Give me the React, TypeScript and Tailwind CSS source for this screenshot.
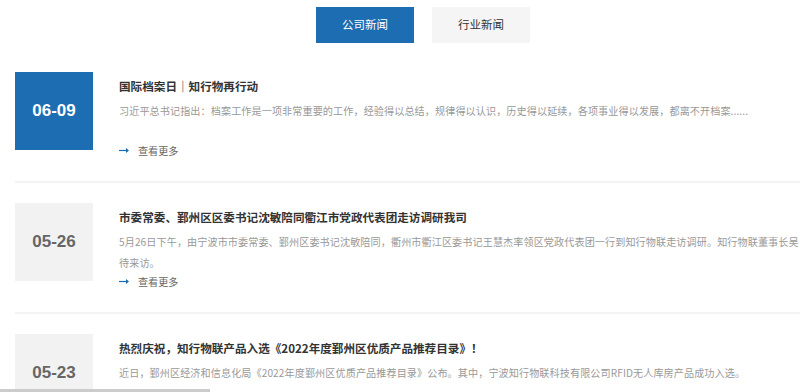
import React from "react";

const cjk = { fontFamily: '"Noto Sans CJK SC", "Noto Sans", sans-serif' };
const arial = { fontFamily: '"Liberation Sans", Arial, sans-serif' };

type Item = {
  date: string;
  active?: boolean;
  title: string;
  lines: string[];
};

const items: Item[] = [
  {
    date: "06-09",
    active: true,
    title: "国际档案日｜知行物再行动",
    lines: [
      "习近平总书记指出：档案工作是一项非常重要的工作，经验得以总结，规律得以认识，历史得以延续，各项事业得以发展，都离不开档案......",
    ],
  },
  {
    date: "05-26",
    title: "市委常委、鄞州区区委书记沈敏陪同衢江市党政代表团走访调研我司",
    lines: [
      "5月26日下午，由宁波市市委常委、鄞州区委书记沈敏陪同，衢州市衢江区委书记王慧杰率领区党政代表团一行到知行物联走访调研。知行物联董事长吴",
      "待来访。",
    ],
  },
  {
    date: "05-23",
    title: "热烈庆祝，知行物联产品入选《2022年度鄞州区优质产品推荐目录》！",
    lines: [
      "近日，鄞州区经济和信息化局《2022年度鄞州区优质产品推荐目录》公布。其中，宁波知行物联科技有限公司RFID无人库房产品成功入选。",
    ],
  },
];

function Arrow() {
  return (
    <svg width="11" height="7" viewBox="0 0 11 7" className="shrink-0">
      <path d="M0 3.5H9" stroke="#1c6db2" strokeWidth="1.2" />
      <path d="M7 1L10 3.5L7 6Z" fill="#1c6db2" />
    </svg>
  );
}

function NewsItem({ item }: { item: Item }) {
  return (
    <div className="pt-[20px] pb-[31px] border-b-2 border-[#f3f3f3]">
      <div className="flex items-start h-[78px]">
        <div
          className={
            "w-[78px] h-[78px] shrink-0 flex items-center justify-center text-[17px] font-bold " +
            (item.active ? "bg-[#1c6db2] text-white" : "bg-[#f2f2f2] text-[#666666]")
          }
          style={arial}
        >
          {item.date}
        </div>
        <div className="ml-[26px] flex flex-col min-w-0" style={cjk}>
          <div className="mt-[4px] h-[20px] leading-[20px] text-[11.6px] font-bold text-[#333333] whitespace-nowrap">
            {item.title}
          </div>
          <div className="mt-[4px] min-h-[42px] text-[10.1px] leading-[21px] text-[#999999]">
            {item.lines.map((l, i) => (
              <div key={i} className="whitespace-nowrap tracking-[0.1px]">
                {l}
              </div>
            ))}
          </div>
          <div className="flex items-center h-[17px] text-[10.1px] text-[#666666]">
            <Arrow />
            <span className="ml-[8px]">查看更多</span>
          </div>
        </div>
      </div>
    </div>
  );
}

export default function App() {
  return (
    <div className="relative w-[800px] h-[392px] overflow-hidden bg-white">
      <div className="w-[846px] px-[15px] pt-[7px]">
        <div className="flex justify-center gap-[18px] mb-[9px]" style={cjk}>
          <div className="w-[98px] h-[36px] flex items-center justify-center bg-[#1c6db2] text-white text-[11.5px]">
            公司新闻
          </div>
          <div className="w-[98px] h-[36px] flex items-center justify-center bg-[#f5f5f5] text-[#333333] text-[11.5px]">
            行业新闻
          </div>
        </div>
        {items.map((it) => (
          <NewsItem key={it.date} item={it} />
        ))}
      </div>
      <div className="absolute left-0 bottom-0 w-[210px] h-[3px] bg-[#cccccc]" />
    </div>
  );
}
